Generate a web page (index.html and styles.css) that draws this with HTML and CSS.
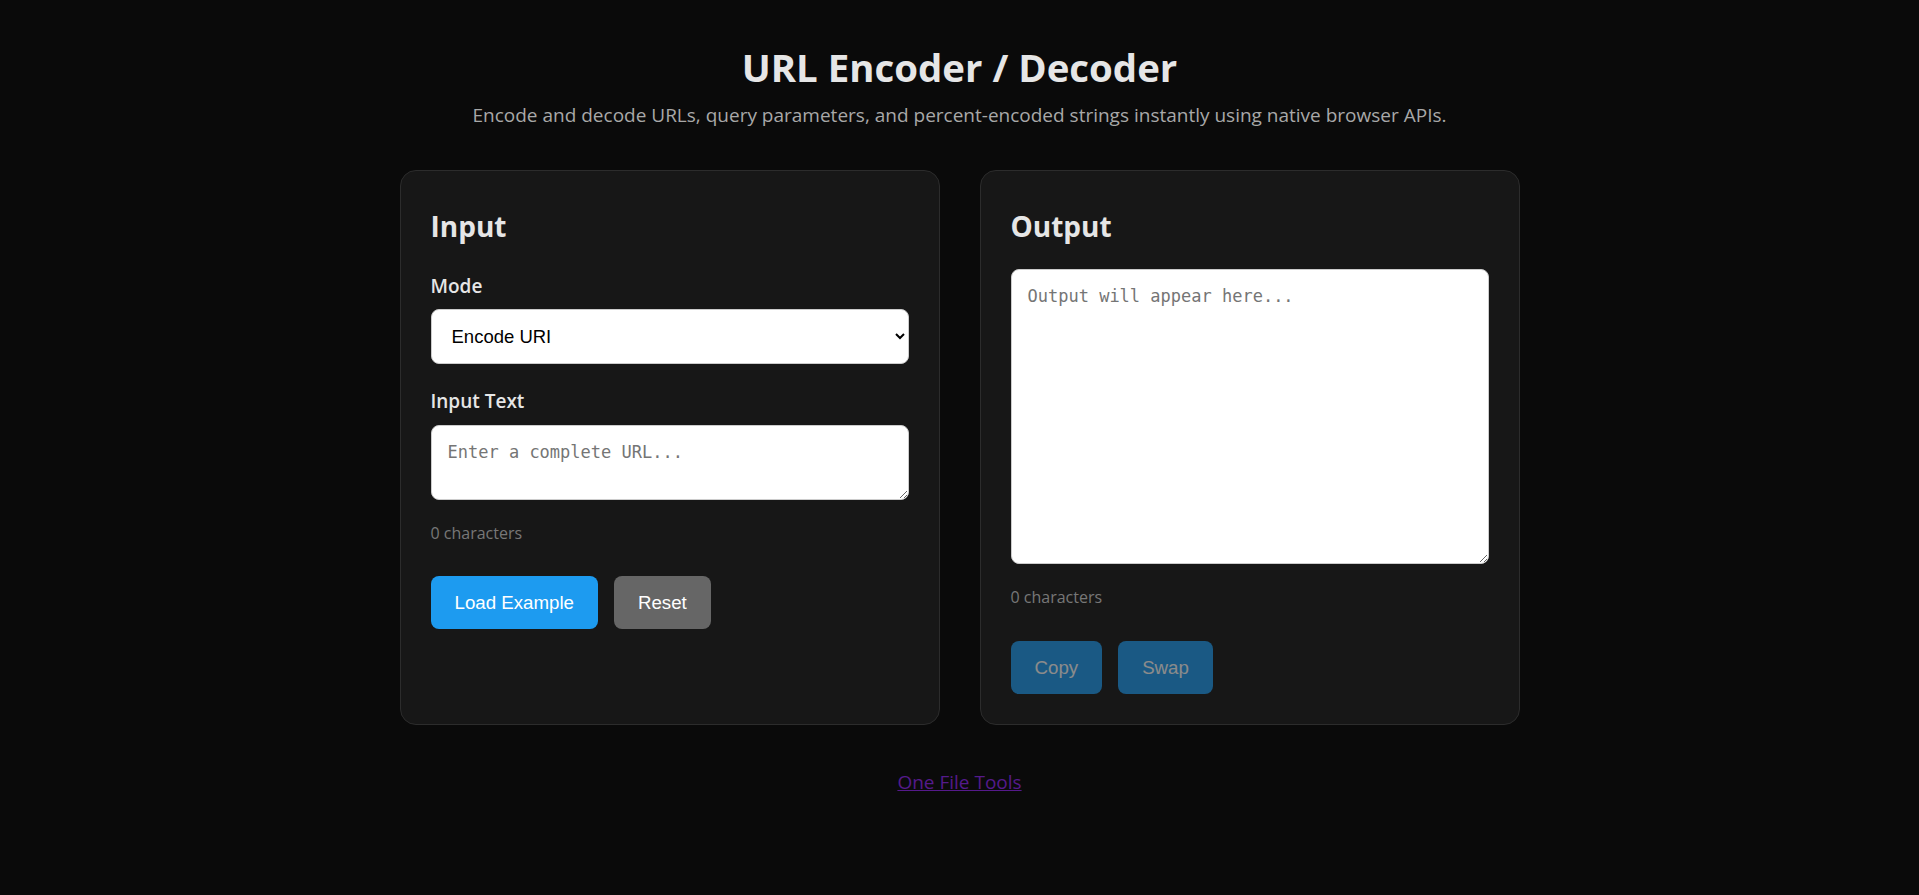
FILE: index.html
```html
<!DOCTYPE html>
<html lang="en">
<head>
    <meta charset="UTF-8">
    <meta name="viewport" content="width=device-width, initial-scale=1.0">
    <title>URL Encoder / Decoder</title>

    <link rel="stylesheet" href="styles.css">
</head>
<body>
    <div class="page">
        <header>
            <h1>URL Encoder / Decoder</h1>
            <p class="subtitle">Encode and decode URLs, query parameters, and percent-encoded strings instantly using native browser APIs.</p>
        </header>

        <main class="panels">
            <section class="panel">
                <h2>Input</h2>

                <label for="mode">Mode</label>
                <select id="mode">
                    <option value="encodeURI">Encode URI</option>
                    <option value="encodeURIComponent">Encode URI Component</option>
                    <option value="decodeURI">Decode URI</option>
                    <option value="decodeURIComponent">Decode URI Component</option>
                </select>

                <label for="input">Input Text</label>
                <textarea id="input" class="input-text" placeholder="Enter a complete URL..."></textarea>
                <div class="count" id="inputCount">0 characters</div>

                <div class="actions">
                    <button type="button" class="btn-primary" id="loadExample">Load Example</button>
                    <button type="button" class="btn-secondary" id="reset">Reset</button>
                </div>
            </section>

            <section class="panel">
                <h2>Output</h2>

                <textarea id="output" class="output-text" placeholder="Output will appear here..." readonly></textarea>
                <div class="count" id="outputCount">0 characters</div>

                <div class="actions">
                    <button type="button" class="btn-primary" id="copy" disabled>Copy</button>
                    <button type="button" class="btn-primary" id="swap" disabled>Swap</button>
                </div>
            </section>
        </main>

        <footer>
            <a href="#">One File Tools</a>
        </footer>
    </div>

    <script>
        const mode = document.getElementById("mode");
        const input = document.getElementById("input");
        const output = document.getElementById("output");

        function update() {
            let result = "";
            try {
                result = input.value ? window[mode.value](input.value) : "";
            } catch (e) {
                result = "Error: " + e.message;
            }
            output.value = result;
            document.getElementById("inputCount").textContent = input.value.length + " characters";
            document.getElementById("outputCount").textContent = result.length + " characters";
            document.getElementById("copy").disabled = !result;
            document.getElementById("swap").disabled = !result;
        }

        input.addEventListener("input", update);
        mode.addEventListener("change", update);

        document.getElementById("loadExample").addEventListener("click", function() {
            input.value = "https://example.com/search?q=hello world&lang=en";
            update();
        });

        document.getElementById("reset").addEventListener("click", function() {
            input.value = "";
            update();
        });

        document.getElementById("copy").addEventListener("click", function() {
            navigator.clipboard.writeText(output.value);
        });

        document.getElementById("swap").addEventListener("click", function() {
            input.value = output.value;
            update();
        });
    </script>
</body>
</html>
```

FILE: styles.css
```css
body {
    margin: 0;
    background: #0a0a0a;
    color: #e6e6e6;
    font-family: "Segoe UI", "Open Sans", sans-serif;
}

.page {
    max-width: 1120px;
    margin: 0 auto;
    padding-top: 44px;
}

header {
    text-align: center;
}

h1 {
    margin: 0;
    font-size: 38.4px;
    line-height: 1.2;
    font-weight: 700;
}

.subtitle {
    margin: 11px 0 40px;
    font-size: 19px;
    line-height: 1.5;
    color: #a8a8a8;
}

.panels {
    display: grid;
    grid-template-columns: 1fr 1fr;
    gap: 40px;
}

.panel {
    background: #171717;
    border: 1px solid #2c2c2c;
    border-radius: 16px;
    padding: 30px;
}

h2 {
    margin: 9px 0 26px;
    font-size: 28px;
    line-height: 1.2;
    font-weight: 700;
}

label {
    display: block;
    font-size: 19px;
    font-weight: 600;
    line-height: 1.8;
    margin-bottom: 6px;
}

select,
textarea {
    display: block;
    width: 100%;
    box-sizing: border-box;
    background: #fff;
    color: #000;
    border: 1px solid #ccc;
    border-radius: 8px;
}

select {
    padding: 15px 16px;
    margin-bottom: 20px;
    font-family: "Liberation Sans", Arial, sans-serif;
    font-size: 18.5px;
}

textarea {
    padding: 16px;
    font-family: Consolas, "DejaVu Sans Mono", monospace;
    font-size: 17px;
}

textarea::placeholder {
    color: #757575;
}

.input-text {
    height: 75px;
}

.output-text {
    height: 295px;
}

.count {
    margin: 22px 0 32px;
    font-size: 16px;
    line-height: 1.4;
    color: #777;
}

.actions {
    display: flex;
    gap: 16px;
}

button {
    padding: 16px 24px;
    border: none;
    border-radius: 8px;
    color: #fff;
    font-family: "Liberation Sans", Arial, sans-serif;
    font-size: 18.7px;
    line-height: 21px;
    cursor: pointer;
}

.btn-primary {
    background: #1d9bf0;
}

.btn-secondary {
    background: #666;
}

button:disabled {
    opacity: 0.5;
    cursor: not-allowed;
}

footer {
    margin-top: 43px;
    text-align: center;
    font-size: 19px;
    line-height: 1.5;
}

footer a {
    color: #551a8b;
}
```
